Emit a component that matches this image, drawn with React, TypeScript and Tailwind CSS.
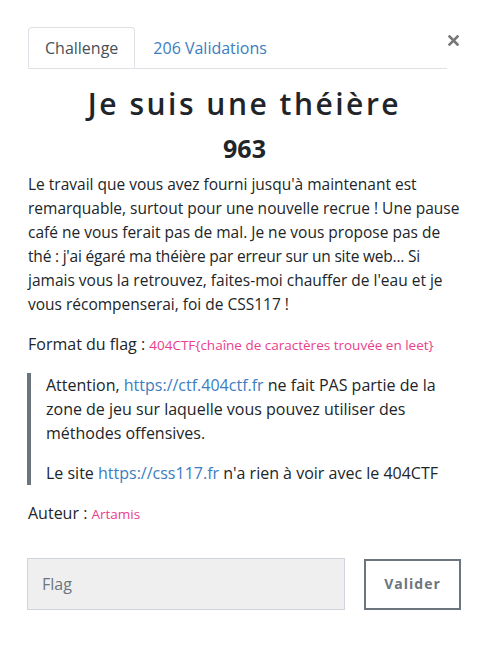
import React from "react";

const linkStyle = "text-[#3b7dc0]";
const codeStyle = "text-[13.5px] text-[#e83e8c]";

const App = () => {
  return (
    <div className="min-h-[648px] w-[483px] bg-white font-['Open_Sans',sans-serif] text-[16px] leading-[24px] text-[#212529]">
      <div className="relative pl-[28px] pr-[22px] pt-[27px]">
        {/* Tabs */}
        <div className="mr-[14px] flex border-b border-[#dee2e6]">
          <div className="-mb-px flex h-[41px] items-center rounded-t-[4px] border border-[#dee2e6] border-b-white bg-white px-[16px] text-[16px] text-[#495057]">
            Challenge
          </div>
          <div className="flex h-[41px] items-center px-[18px] text-[16px] text-[#3b7dc0]">
            206 Validations
          </div>
        </div>
        <button className="absolute right-[24px] top-[35px]">
          <svg width="11" height="11" viewBox="0 0 11 11">
            <path
              d="M1.5 1.5 L9.5 9.5 M9.5 1.5 L1.5 9.5"
              stroke="#777"
              strokeWidth="2.6"
              strokeLinecap="square"
            />
          </svg>
        </button>

        {/* Heading */}
        <h1 className="mt-[15px] text-center text-[30px] font-semibold leading-[40px] tracking-[2.5px] text-[#212529]">
          Je suis une théière
        </h1>
        <h2 className="mt-[7px] text-center text-[25px] font-bold leading-[34px]">
          963
        </h2>

        {/* Description */}
        <p className="mt-[7px] whitespace-nowrap text-[15.5px]">
          Le travail que vous avez fourni jusqu'à maintenant est
          <br />
          remarquable, surtout pour une nouvelle recrue ! Une pause
          <br />
          café ne vous ferait pas de mal. Je ne vous propose pas de
          <br />
          <span className="tracking-[-0.2px]">
            thé : j'ai égaré ma théière par erreur sur un site web... Si
          </span>
          <br />
          jamais vous la retrouvez, faites-moi chauffer de l'eau et je
          <br />
          vous récompenserai, foi de CSS117 !
        </p>

        <p className="mt-[16px]">
          Format du flag :{" "}
          <span className={codeStyle}>
            404CTF{"{"}chaîne de caractères trouvée en leet{"}"}
          </span>
        </p>

        <blockquote className="-ml-px mt-[16px] whitespace-nowrap border-l-[4px] border-[#6c757d] pl-[15px]">
          <p>
            Attention, <span className={linkStyle}>https://ctf.404ctf.fr</span>{" "}
            ne fait PAS partie de la
            <br />
            zone de jeu sur laquelle vous pouvez utiliser des
            <br />
            méthodes offensives.
          </p>
          <p className="mt-[16px]">
            Le site <span className={linkStyle}>https://css117.fr</span> n'a
            rien à voir avec le 404CTF
          </p>
        </blockquote>

        <p className="mt-[16px]">
          Auteur : <span className={codeStyle}>Artamis</span>
        </p>

        {/* Flag form */}
        <div className="-ml-px mt-[32px] flex items-center gap-[19px]">
          <input
            placeholder="Flag"
            className="h-[52px] min-w-0 flex-1 border border-[#ced4da] bg-[#efefef] px-[14px] text-[16px] text-[#495057] placeholder:text-[#6c757d]"
          />
          <button className="h-[51px] w-[97px] border-2 border-[#6c757d] text-[14px] font-bold tracking-[1px] text-[#6c757d]">
            Valider
          </button>
        </div>
      </div>
    </div>
  );
};

export default App;
